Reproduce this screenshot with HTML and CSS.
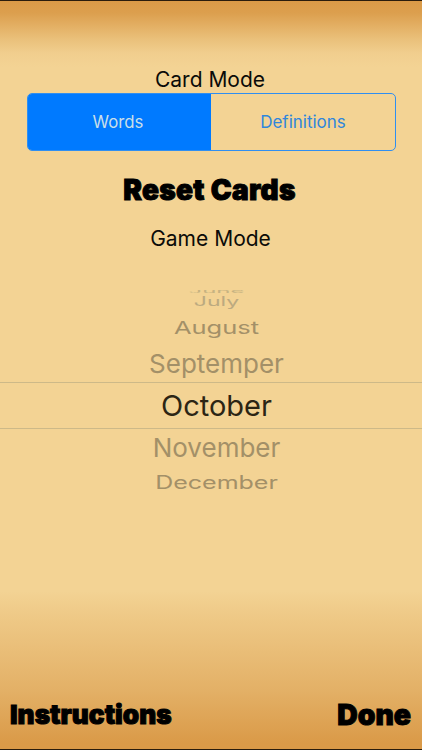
FILE: index.html
```html
<!DOCTYPE html>
<html lang="en">
<head>
<meta charset="utf-8">
<title>Settings</title>
<link rel="stylesheet" href="styles.css">
</head>
<body>
<main class="screen">
  <section class="top">
    <h2 class="label card-label">Card Mode</h2>
    <div class="segmented">
      <button class="seg seg-on">Words</button>
      <button class="seg">Definitions</button>
    </div>
    <button class="reset">Reset Cards</button>
    <h2 class="label game-label">Game Mode</h2>
  </section>
  <section class="picker">
    <div class="item i-june"><span>June</span></div>
    <div class="item i-july"><span>July</span></div>
    <div class="item i-aug"><span>August</span></div>
    <div class="item i-sep"><span>Septemper</span></div>
    <div class="item i-oct"><span>October</span></div>
    <div class="item i-nov"><span>November</span></div>
    <div class="item i-dec"><span>December</span></div>
  </section>
  <footer class="bottom">
    <button class="heavy instructions">Instructions</button>
    <button class="heavy done">Done</button>
  </footer>
</main>
</body>
</html>
```
FILE: styles.css
```css
* { box-sizing: border-box; }
html, body { margin: 0; height: 100%; }
body { font-family: "Inter", "Liberation Sans", sans-serif; color: #000; overflow: hidden; }
button { font: inherit; color: inherit; background: none; border: 0; padding: 0; }

.screen {
  width: 422px;
  height: 750px;
  display: flex;
  flex-direction: column;
  border-top: 1px solid #2a1c0c;
  border-bottom: 1px solid #2a1c0c;
  background: linear-gradient(180deg, #da9a48 0, #dc9f4e 12px, #eac07a 38px, #f1ce8e 52px, #f3d394 66px, #f3d394 590px, #efca88 612px, #e3b066 690px, #da9a48 742px, #da9a48 750px);
}
.top { display: flex; flex-direction: column; align-items: stretch; padding: 67px 0 0; }
.label { margin: 0; text-align: center; font-weight: 400; font-size: 21px; line-height: 24px; color: #0b0b08; }
.card-label { padding-right: 2px; }
.segmented {
  margin: 1px 26px 0 27px;
  height: 58px;
  display: flex;
  border: 1px solid #2f8ef0;
  border-radius: 5px;
  overflow: hidden;
}
.seg { flex: 1; font-size: 17px; color: #2f86dc; }
.seg-on { background: #007aff; color: #c9dfe8; flex: 0 0 183px; padding-right: 3px; font-size: 16.8px; }
.reset {
  margin-top: 21px;
  font-weight: 900;
  font-size: 28px;
  line-height: 36px;
  text-align: center;
  letter-spacing: 0.3px;
  -webkit-text-stroke: 1px #000;
  padding-right: 3px;
}
.game-label { margin-top: 19px; padding-right: 1px; }
.picker { margin-top: 39px; display: flex; flex-direction: column; align-items: center; }
.item { width: 100%; display: flex; justify-content: center; padding-left: 11px; overflow: hidden; color: #a39068; }
.item span { display: block; }
.i-june { height: 3px; font-size: 24px; line-height: 12px; color: #c7b382; align-items: flex-end; }
.i-june span { transform: scaleY(.2); transform-origin: bottom; }
.i-july { height: 18px; font-size: 23px; line-height: 18px; color: #bcaa80; }
.i-july span { transform: scaleY(.55); }
.i-aug { height: 34px; font-size: 25.5px; line-height: 34px; }
.i-aug span { transform: scaleY(.7); }
.i-sep { height: 37px; font-size: 26px; line-height: 37px; }
.i-oct { height: 47px; font-size: 29px; line-height: 45px; color: #2c2514; border-top: 1px solid #cdb988; border-bottom: 1px solid #cdb988; }
.i-nov { height: 37px; font-size: 26px; line-height: 37px; }
.i-dec { height: 34px; font-size: 25px; line-height: 34px; }
.i-dec span { transform: scaleY(.72); }
.bottom {
  margin-top: auto;
  padding: 0 11px 16px 10px;
  display: flex;
  justify-content: space-between;
}
.heavy {
  font-weight: 900;
  line-height: 36px;
  -webkit-text-stroke: 1px #000;
}
.instructions { font-size: 26.2px; }
.done { font-size: 28.3px; }
```
